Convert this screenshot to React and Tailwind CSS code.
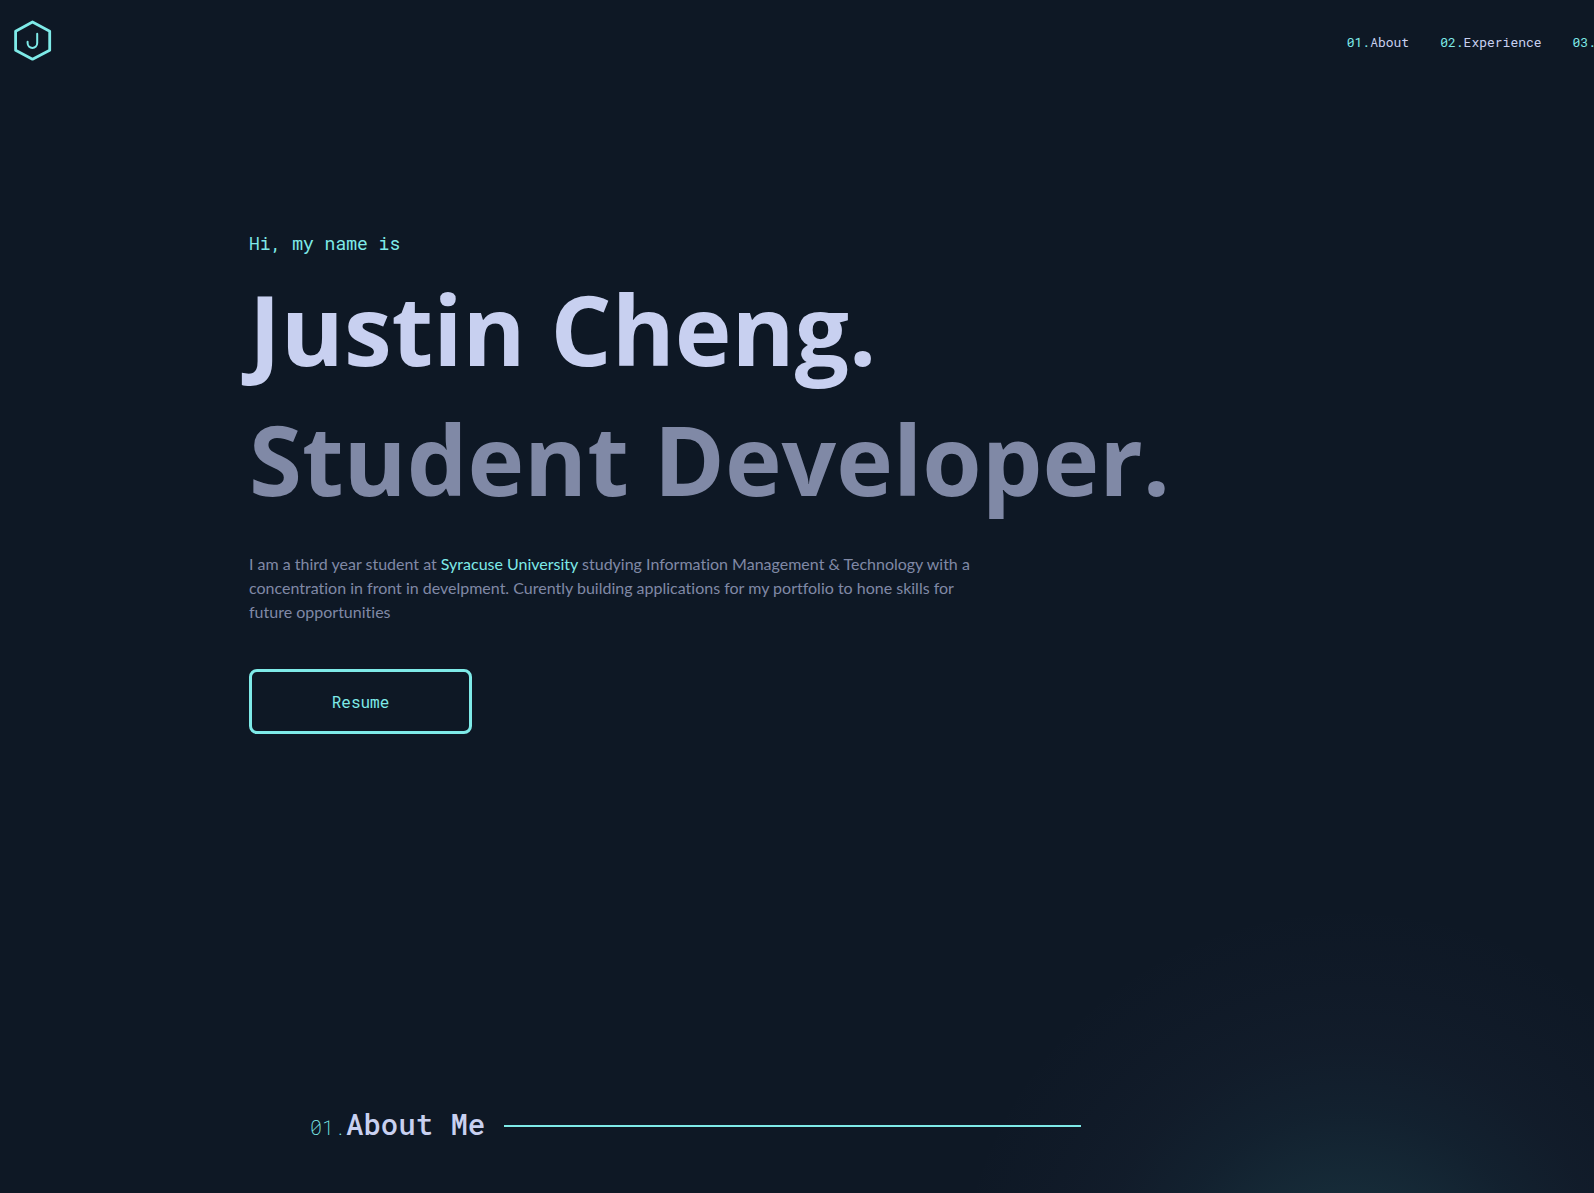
const mono = "font-['Roboto_Mono','DejaVu_Sans_Mono',monospace]";

const links = [
  { number: "01.", label: "About", href: "#about" },
  { number: "02.", label: "Experience", href: "#experience" },
  { number: "03.", label: "", href: "#more" },
];

function Logo() {
  return (
    <svg viewBox="0 0 40 44" className="h-11 w-10" fill="none" stroke="#7eeae8" strokeLinejoin="round" strokeLinecap="round" aria-hidden="true">
      <path d="M19.5 4 36.7 13.2v19L19.5 41.2 2.6 32.2v-19Z" strokeWidth="2.8" />
      <path d="M24.2 15.7v9.4a4.8 4.8 0 0 1-9.6 0v-1.3" strokeWidth="2" />
    </svg>
  );
}

function Header() {
  return (
    <header className="flex items-start justify-between pl-[13px] pt-[18px]">
      <a href="#top" aria-label="Home">
        <Logo />
      </a>
      <nav className={`${mono} -mr-0.5 mt-3.5 flex gap-[31px] whitespace-nowrap text-[13px] leading-5 text-[#c8d0f0]`}>
        {links.map((link) => (
          <a key={link.number} href={link.href}>
            <span className="text-[#7eeae8]">{link.number}</span>
            {link.label}
          </a>
        ))}
      </nav>
    </header>
  );
}

function Hero() {
  return (
    <section className="pl-[249px] pt-[169px]">
      <p className={`${mono} text-[18px] leading-6 text-[#7eeae8]`}>Hi, my name is</p>
      <div className="mt-[9px] font-['Open_Sans',sans-serif] text-[96px] font-bold leading-[130px]">
        <h1 className="text-[#c8d0f0]">Justin Cheng.</h1>
        <h2 className="text-[#8089a6]">Student Developer.</h2>
      </div>
      <p className="mt-7 max-w-[732px] font-['Lato',sans-serif] text-base font-normal leading-6 text-[#8089a6] [font-variant-ligatures:none]">
        I am a third year student at{" "}
        <a href="#syracuse" className="text-[#7eeae8]">Syracuse University</a>{" "}
        studying Information Management &amp; Technology with a concentration in front in develpment. Curently building
        applications for my portfolio to hone skills for future opportunities
      </p>
      <button
        type="button"
        className={`${mono} mt-[45px] h-[65px] w-[223px] rounded-lg border-3 border-[#7eeae8] text-base text-[#7eeae8]`}
      >
        Resume
      </button>
    </section>
  );
}

function About() {
  return (
    <section id="about" className="relative mt-[370px] pb-10 pl-[310px]">
      <div className="pointer-events-none absolute -right-[155px] -top-[200px] size-[800px] bg-[radial-gradient(circle_closest-side,rgba(100,225,240,0.14)_0%,rgba(100,225,240,0.09)_29%,rgba(100,200,235,0.05)_48%,rgba(120,150,200,0.03)_65%,rgba(120,130,190,0.015)_82%,rgba(110,130,190,0)_100%)]" />
      <div className="relative flex items-center">
        <h2 className={`${mono} whitespace-nowrap text-[29px] font-medium leading-10 text-[#c8d0f0]`}>
          <span className="text-[20px] font-extralight text-[#7eeae8]">01.</span>About Me
        </h2>
        <hr className="ml-[19px] w-[577px] border-0 border-t-2 border-[#7eeae8]" />
      </div>
    </section>
  );
}

export default function App() {
  return (
    <div id="top" className="min-h-screen overflow-hidden bg-[#0e1825]">
      <Header />
      <main>
        <Hero />
        <About />
      </main>
    </div>
  );
}
